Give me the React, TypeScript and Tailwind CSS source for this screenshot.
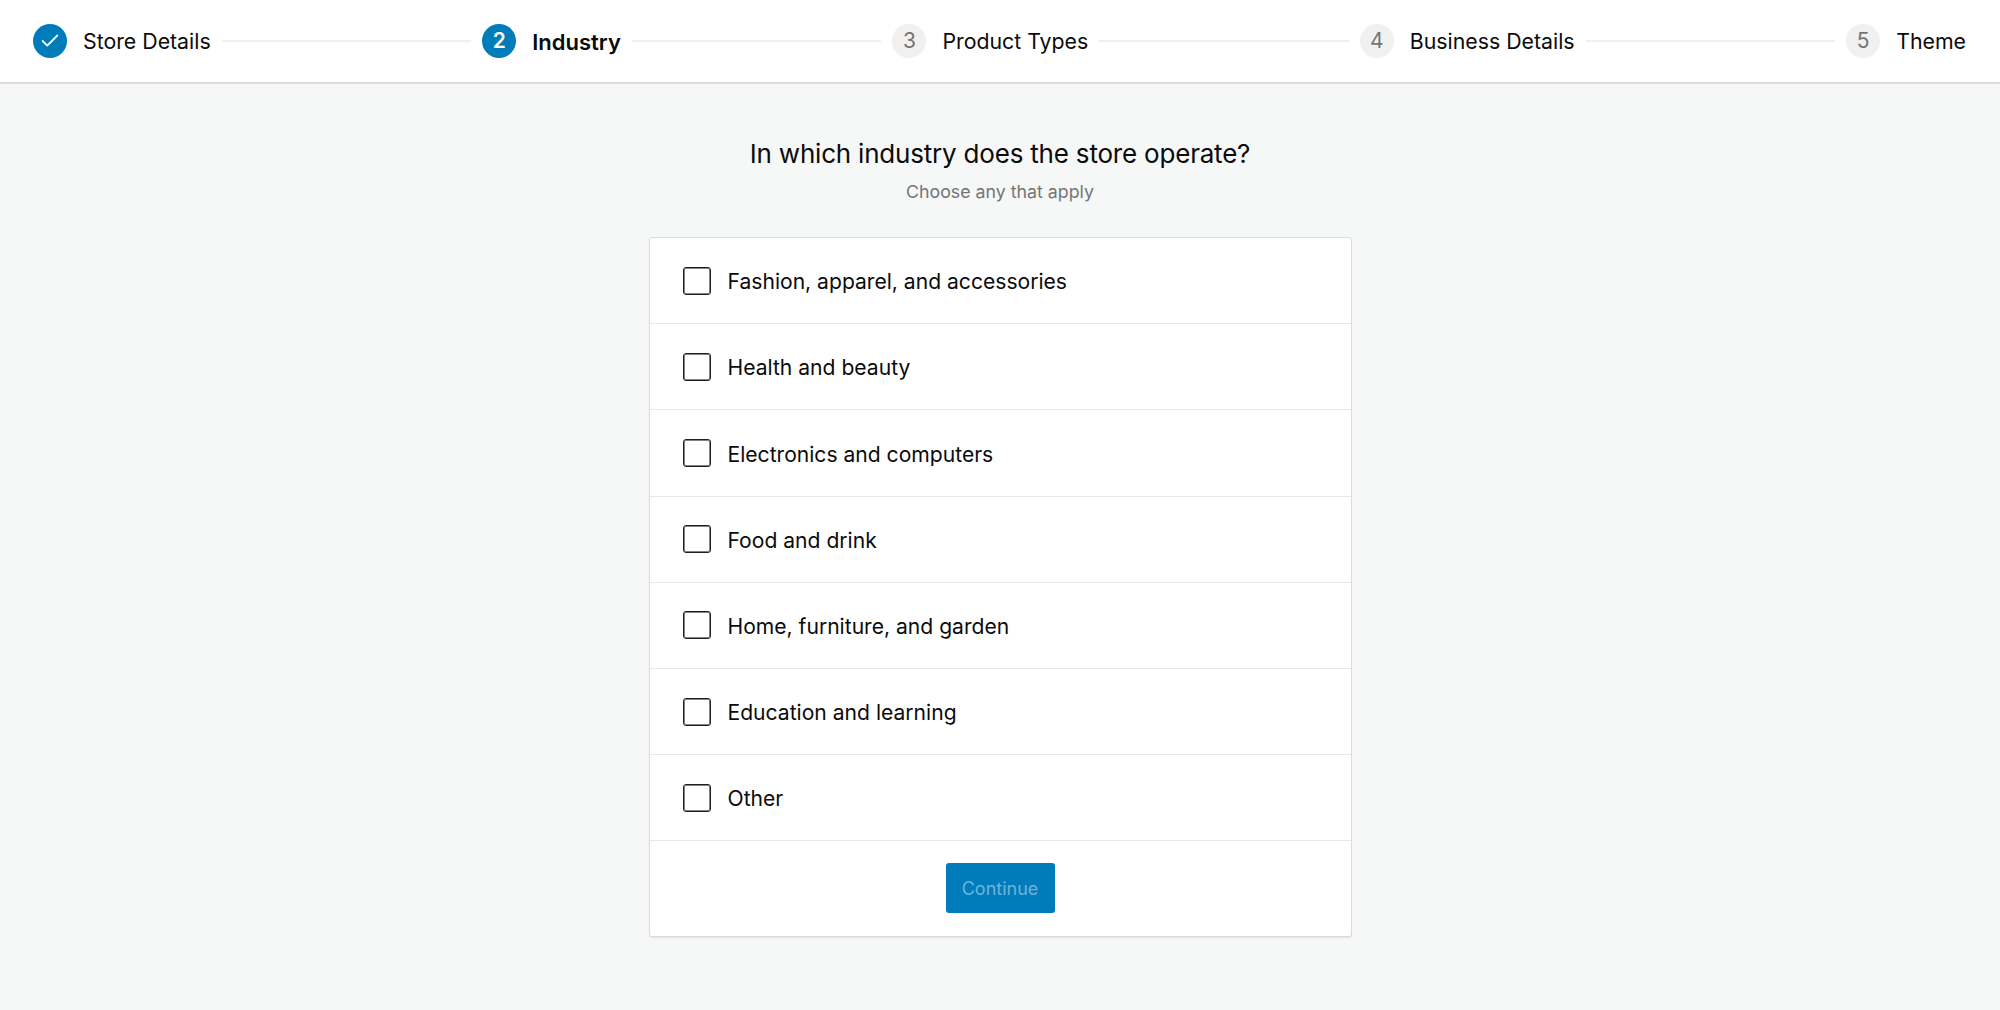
import { Fragment } from "react";
import { Check } from "lucide-react";

const steps = ["Store Details", "Industry", "Product Types", "Business Details", "Theme"];
const industries = [
  "Fashion, apparel, and accessories",
  "Health and beauty",
  "Electronics and computers",
  "Food and drink",
  "Home, furniture, and garden",
  "Education and learning",
  "Other",
];

function StepBadge({ index }: { index: number }) {
  if (index === 0) {
    return (
      <span className="flex size-[34px] shrink-0 items-center justify-center rounded-full bg-[#007cba] text-white">
        <Check className="size-[22px]" strokeWidth={2} />
      </span>
    );
  }
  if (index === 1) {
    return (
      <span className="flex size-[34px] shrink-0 items-center justify-center rounded-full bg-[#007cba] text-[21px] font-semibold text-white">
        {index + 1}
      </span>
    );
  }
  return (
    <span className="flex size-[34px] shrink-0 items-center justify-center rounded-full bg-[#f0f0f0] text-[21px] text-[#757575]">
      {index + 1}
    </span>
  );
}

export default function App() {
  return (
    <div className="flex h-[1010px] flex-col overflow-hidden bg-[#f6f7f7] font-['Inter',sans-serif] text-[#0b0b0b]">
      <header className="flex h-[84px] shrink-0 items-center border-b-2 border-[#dcdcde] bg-white pr-[34px] pl-[33px]">
        {steps.map((step, i) => (
          <Fragment key={step}>
            <StepBadge index={i} />
            <span className={i === 1 ? "ml-4 pt-0.5 text-[22px] font-semibold" : "ml-4 pt-0.5 text-[21.3px]"}>{step}</span>
            {i < steps.length - 1 && <span className="mx-[11px] h-0.5 flex-1 bg-[#f0f0f0]" />}
          </Fragment>
        ))}
      </header>
      <main className="flex flex-col items-center pt-[52px]">
        <h1 className="text-[26px] leading-9 tracking-[-0.2px]">In which industry does the store operate?</h1>
        <p className="mt-[6px] text-[17.75px] leading-7 text-[#757575]">Choose any that apply</p>
        <div className="mt-[31px] w-[703px] rounded-[3px] border border-[#dcdcde] bg-white shadow-[0_1px_1px_rgba(0,0,0,0.08)]">
          {industries.map((name) => (
            <label key={name} className="flex h-[86.2px] items-center border-b border-[#e8e8e8] pl-[33px]">
              <span className="size-7 rounded-[3px] border border-[#1e1e1e] bg-white shadow-[inset_0_0_0_1px_rgba(30,30,30,0.55)]" />
              <span className="ml-[17px] pt-[3px] text-[21.1px]">{name}</span>
            </label>
          ))}
          <div className="flex h-[95px] items-start justify-center pt-[22px]">
            <button className="h-[50px] w-[109px] rounded-[3px] bg-[#007cba] text-[18px] text-[#6fb2dc]">Continue</button>
          </div>
        </div>
      </main>
    </div>
  );
}
